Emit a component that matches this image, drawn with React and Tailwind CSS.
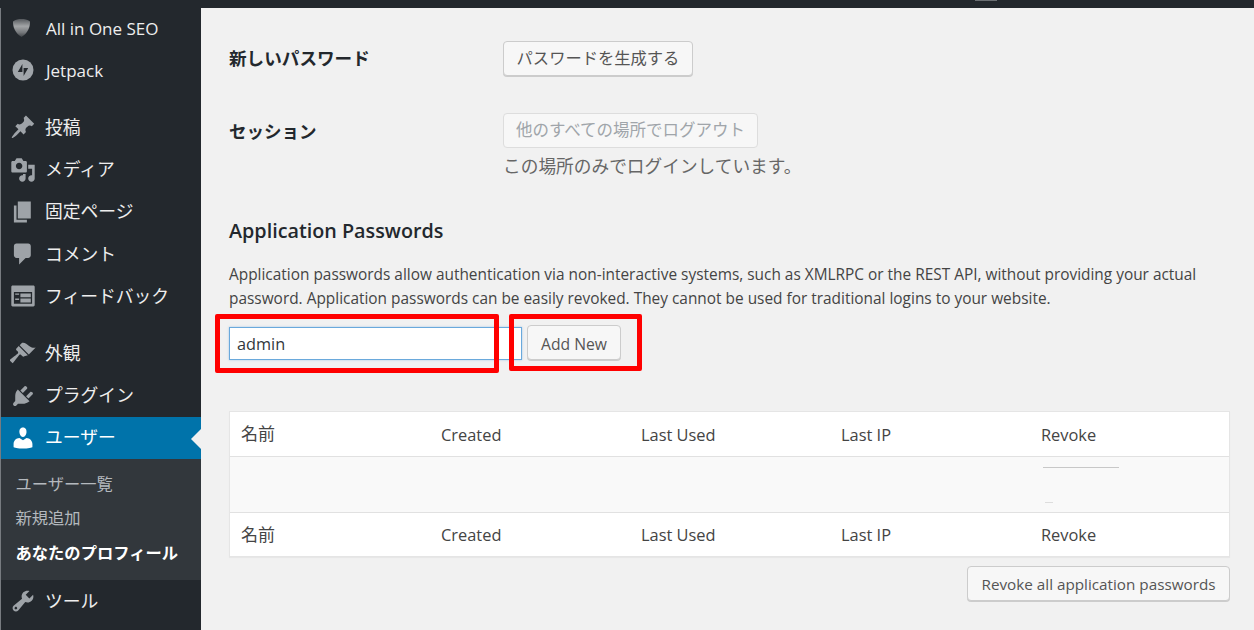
const JP = { fontFamily: '"Open Sans", "Noto Sans CJK JP", sans-serif' };

const Dash = ({ d, className = "" }) => (
  <svg viewBox="0 0 20 20" className={`w-[26px] h-[26px] fill-current ${className}`}>
    <path d={d} />
  </svg>
);

// grey shield of the SEO plugin, darker at top and bottom
const Shield = () => (
  <svg viewBox="0 0 26 26" className="w-[26px] h-[26px]">
    <defs>
      <linearGradient id="shield" x1="0" y1="0" x2="0" y2="1">
        <stop offset="0" stopColor="#55595d" />
        <stop offset="0.4" stopColor="#a3a5a7" />
        <stop offset="0.75" stopColor="#75787b" />
        <stop offset="1" stopColor="#3f4347" />
      </linearGradient>
    </defs>
    <path d="M3 6.500C5.500 4.600 8.500 4 11.500 4s6 .6 8.500 2.500c.3 5.500-2.500 12-8.500 15.500C5.500 18.500 2.700 12 3 6.500z" fill="url(#shield)" />
  </svg>
);

const Jetpack = () => (
  <svg viewBox="0 0 26 26" className="w-[26px] h-[26px]">
    <circle cx="13" cy="13" r="10.500" fill="#a0a5aa" />
    <path d="M12.400 7l-4.600 8h4.600zM13.600 11v8l4.600-8z" fill="#23282d" />
  </svg>
);

const icons = {
  pin: "M10.44 3.02l1.82-1.82 6.36 6.35-1.83 1.82c-1.05-.68-2.48-.57-3.41.36l-.75.75c-.92.93-1.04 2.35-.35 3.41l-1.83 1.82-2.41-2.41-2.8 2.79c-.42.42-3.38 2.71-3.8 2.29s1.86-3.39 2.28-3.81l2.79-2.79L4.1 9.36l1.83-1.82c1.05.69 2.48.57 3.4-.36l.75-.75c.93-.92 1.05-2.35.36-3.41z",
  media: "M13 11V4c0-.55-.45-1-1-1h-1.67L9 1H5L3.67 3H2c-.55 0-1 .45-1 1v7c0 .55.45 1 1 1h10c.55 0 1-.45 1-1zM7 4.5c1.38 0 2.5 1.12 2.5 2.5S8.38 9.5 7 9.5 4.5 8.38 4.5 7 5.62 4.5 7 4.5zM14 6h5v10.5c0 1.38-1.12 2.5-2.5 2.5S14 17.88 14 16.5s1.12-2.5 2.5-2.5c.17 0 .34.02.5.05V9h-3V6zm-4 8.05V13h2v3.5c0 1.38-1.12 2.5-2.5 2.5S7 17.88 7 16.5 8.12 14 9.5 14c.17 0 .34.02.5.05z",
  page: "M6 15V2h10v13H6zm-1 1h8v2H3V5h2v11z",
  comment: "M5 2h9c1.1 0 2 .9 2 2v7c0 1.1-.9 2-2 2h-2l-5 5v-5H5c-1.1 0-2-.9-2-2V4c0-1.1.9-2 2-2z",
  feedback: "M2 2h16c.55 0 1 .45 1 1v14c0 .55-.45 1-1 1H2c-.55 0-1-.45-1-1V3c0-.55.45-1 1-1zm15 14V7H3v9h14zM4 8v1h3V8H4zm4 0v3h8V8H8zm-4 4v1h3v-1H4zm4 0v3h8v-3H8z",
  brush: "M14.48 11.06L7.41 3.99l1.5-1.5c.5-.56 2.3-.47 3.51.32 1.21.8 1.43 1.28 2.91 2.1 1.18.64 2.45 1.26 4.45.85zm-.71.71L6.7 4.7 4.93 6.47c-.39.39-.39 1.02 0 1.41l1.06 1.06c.39.39.39 1.03 0 1.42-.6.6-6.4 5.1-6.4 5.1l2.45 2.45s4.5-5.8 5.1-6.4c.39-.39 1.02-.39 1.41 0l1.06 1.06c.39.39 1.02.39 1.41 0z",
  plug: "M13.11 4.36L9.87 7.6 8 5.73l3.24-3.24c.35-.34 1.05-.2 1.56.32.52.51.66 1.21.31 1.55zm-8 1.77l.91-1.12 9.01 9.01-1.19.84c-.71.71-2.63 1.16-3.82 1.16H6.14L4.9 17.26c-.59.59-1.54.59-2.12 0-.59-.58-.59-1.53 0-2.12l1.24-1.24v-3.88c0-1.13.4-3.19 1.09-3.89zm7.26 3.97l3.24-3.24c.34-.35 1.04-.21 1.55.31.52.51.66 1.21.31 1.55l-3.24 3.25z",
  user: "M10 9.25c-2.27 0-2.73-3.44-2.73-3.44C7 4.02 7.82 2 9.97 2c2.16 0 2.98 2.02 2.71 3.81 0 0-.41 3.44-2.68 3.44zm0 2.57L12.72 10c2.39 0 4.52 2.33 4.52 4.53v2.49s-3.65 1.13-7.24 1.13c-3.65 0-7.24-1.13-7.24-1.13v-2.49c0-2.25 1.94-4.48 4.47-4.48z",
  wrench: "M16.68 9.77c-1.34 1.34-3.3 1.67-4.95.99l-5.41 6.52c-.99.99-2.59.99-3.58 0s-.99-2.59 0-3.57l6.52-5.42c-.68-1.65-.35-3.61.99-4.95 1.28-1.28 3.12-1.62 4.72-1.06l-2.89 2.89 2.82 2.82 2.86-2.87c.53 1.58.18 3.39-1.08 4.65zM3.81 16.21c.4.39 1.04.39 1.43 0 .4-.4.4-1.04 0-1.43-.39-.4-1.03-.4-1.43 0-.39.39-.39 1.03 0 1.43z",
};

const MenuItem = ({ icon, custom, label, active, latin }) => (
  <div className={`h-[42.3px] flex items-center relative ${active ? "bg-[#0073aa] text-white" : "text-[#eeeeee]"}`}>
    <div className={`w-[45px] pl-[9px] shrink-0 ${active ? "text-white" : "text-[#9ea3a8]"}`}>
      {custom || <Dash d={icons[icon]} />}
    </div>
    <span className={`leading-none ${latin ? "text-[17px]" : "text-[17.8px] -ml-px pt-[1px]"}`}>{label}</span>
    {active && (
      <span className="absolute right-0 top-[12px] border-y-[10px] border-r-[10px] border-y-transparent border-r-[#f1f1f1]" />
    )}
  </div>
);

const Btn = ({ children, className = "" }) => (
  <button className={`h-[35px] rounded-[4px] border border-[#cccccc] bg-[#f7f7f7] shadow-[0_1px_0_#cccccc] text-[#555555] leading-none whitespace-nowrap ${className}`}>
    {children}
  </button>
);

const Row = ({ className = "" }) => (
  <div className={`grid grid-cols-[200px_200px_200px_200px_1fr] items-center pt-[2px] text-[16.4px] text-[#444444] ${className}`}>
    <span className="pl-[11px] -mt-[2px] text-[17px]">名前</span>
    <span className="pl-[11px]">Created</span>
    <span className="pl-[11px]">Last Used</span>
    <span className="pl-[11px]">Last IP</span>
    <span className="pl-[11px]">Revoke</span>
  </div>
);

export default function App() {
  return (
    <div className="w-[1254px] h-[630px] overflow-hidden bg-[#f1f1f1]" style={JP}>
      <div className="h-[8px] bg-[#23282d]">
        <div className="w-[22px] h-px ml-[975px] bg-[#6b6f73]" />
      </div>
      <div className="flex h-[622px]">
        {/* sidebar */}
        <aside className="w-[201px] shrink-0 h-full bg-[#23282d] border-l border-[#777b80] overflow-hidden">
          <div className="-mt-px">
            <MenuItem custom={<Shield />} label="All in One SEO" latin />
            <MenuItem custom={<Jetpack />} label="Jetpack" latin />
          </div>
          <div className="mt-[14.5px]">
            <MenuItem icon="pin" label="投稿" />
            <MenuItem icon="media" label="メディア" />
            <MenuItem icon="page" label="固定ページ" />
            <MenuItem icon="comment" label="コメント" />
            <MenuItem icon="feedback" label="フィードバック" />
          </div>
          <div className="mt-[14.5px]">
            <MenuItem icon="brush" label="外観" />
            <MenuItem icon="plug" label="プラグイン" />
            <MenuItem icon="user" label="ユーザー" active />
            <div className="bg-[#32373c] h-[121px] pt-[8px] pl-[14.5px] text-[16.3px]">
              <div className="h-[34px] flex items-center text-[#b4b9be]">ユーザー一覧</div>
              <div className="h-[35px] flex items-center text-[#b4b9be]">新規追加</div>
              <div className="h-[34px] flex items-center text-white font-bold">あなたのプロフィール</div>
            </div>
            <MenuItem icon="wrench" label="ツール" />
          </div>
        </aside>

        {/* content */}
        <main className="flex-1 pl-[28px] pr-[24px] text-[#444444]">
          <div className="flex items-center h-[35px] mt-[33px]">
            <div className="w-[274px] text-[17.6px] font-semibold text-[#23282d]">新しいパスワード</div>
            <Btn className="w-[190px] text-[16.3px]">パスワードを生成する</Btn>
          </div>
          <div className="flex items-center h-[35px] mt-[37px]">
            <div className="w-[274px] text-[17.5px] font-semibold text-[#23282d] pt-[2px]">セッション</div>
            <Btn className="w-[255px] text-[16.5px] !text-[#a0a5aa] !border-[#dddddd] !shadow-none">他のすべての場所でログアウト</Btn>
          </div>
          <p className="ml-[274px] mt-[5px] text-[17.7px] leading-[26px] text-[#666666]">この場所のみでログインしています。</p>

          <h2 className="mt-[38px] text-[19.75px] leading-[28px] font-semibold text-[#23282d]">Application Passwords</h2>
          <p className="mt-[18px] text-[15.42px] leading-[24px]">
            Application passwords allow authentication via non-interactive systems, such as XMLRPC or the REST API, without providing your actual password. Application passwords can be easily revoked. They cannot be used for traditional logins to your website.
          </p>
          <div className="flex items-end gap-[5px] mt-[14px]">
            <div className="w-[293px] h-[33px] bg-white border border-[#6aa9dc] shadow-[0_0_2px_rgba(91,157,217,0.5)]">
              <input
                readOnly
                value="admin"
                className="w-full h-full px-[7px] bg-white text-[16.3px] text-[#32373c] outline-none"
              />
            </div>
            <Btn className="w-[94px] pt-[5px] text-[15.7px]">Add New</Btn>
          </div>

          <div className="mt-[51px] bg-white border border-[#e5e5e5] shadow-[0_1px_1px_rgba(0,0,0,0.04)]">
            <Row className="h-[45px] border-b border-[#e1e1e1]" />
            <div className="h-[56px] bg-[#f9f9f9] border-b border-[#e1e1e1] pl-[813px] pt-[10px]">
              <div className="w-[76px] h-px bg-[#c8c8c8]" />
              <div className="w-[8px] h-px bg-[#dddddd] ml-[2px] mt-[34px]" />
            </div>
            <Row className="h-[43px]" />
          </div>
          <div className="flex justify-end mt-[9px]">
            <Btn className="w-[263px] h-[34px] pt-[2px] text-[15.25px]">Revoke all application passwords</Btn>
          </div>
        </main>
      </div>

      {/* red annotation boxes */}
      <div className="fixed left-[215px] top-[314px] w-[284px] h-[59px] border-[5px] border-[#ff0000] rounded-[2px]" />
      <div className="fixed left-[509px] top-[314px] w-[133px] h-[57px] border-[5px] border-[#ff0000] rounded-[2px]" />
    </div>
  );
}
